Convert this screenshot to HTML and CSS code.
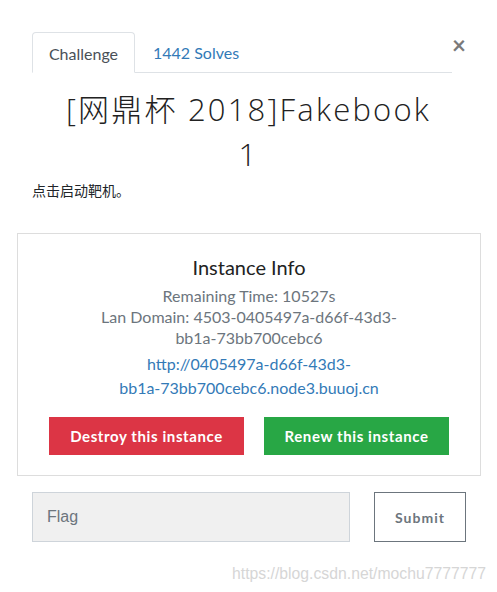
FILE: index.html
```html
<!DOCTYPE html>
<html>
<head>
<meta charset="utf-8">
<link rel="stylesheet" href="styles.css">
</head>
<body>
<div class="modal">
  <div class="tabs-row">
    <ul class="tabs">
      <li class="tab active">Challenge</li>
      <li class="tab link">1442 Solves</li>
    </ul>
    <span class="close">&times;</span>
  </div>
  <h2 class="title">[网鼎杯 2018]Fakebook<br>1</h2>
  <p class="desc">点击启动靶机。</p>
  <div class="instance">
    <h4 class="inst-title">Instance Info</h4>
    <p class="muted">Remaining Time: 10527s</p>
    <p class="muted">Lan Domain: 4503-0405497a-d66f-43d3-<br>bb1a-73bb700cebc6</p>
    <p class="url"><a href="#">http://0405497a-d66f-43d3-<br>bb1a-73bb700cebc6.node3.buuoj.cn</a></p>
    <div class="actions">
      <button class="btn danger">Destroy this instance</button>
      <button class="btn success">Renew this instance</button>
    </div>
  </div>
  <div class="submit-row">
    <div class="flag-input">Flag</div>
    <button class="submit">Submit</button>
  </div>
  <div class="watermark">https://blog.csdn.net/mochu7777777</div>
</div>
</body>
</html>
```
FILE: styles.css
```css
html, body {
  margin: 0;
  padding: 0;
  background: #fff;
}
body {
  font-family: Lato, "Noto Sans CJK SC", sans-serif;
  color: #212529;
  width: 497px;
  height: 592px;
  overflow: hidden;
}
.modal {
  padding-top: 32px;
}
.tabs-row {
  display: flex;
  align-items: flex-start;
  margin-left: 32px;
}
.tabs {
  list-style: none;
  margin: 0;
  padding: 0;
  display: flex;
  width: 420px;
  border-bottom: 1px solid #dee2e6;
  height: 41px;
  box-sizing: border-box;
}
.tab {
  font-size: 16px;
  line-height: 42px;
  box-sizing: border-box;
  height: 41px;
}
.tab.active {
  color: #495057;
  width: 103px;
  text-align: center;
  border: 1px solid #dee2e6;
  border-bottom-color: #fff;
  border-radius: 4px 4px 0 0;
  background: #fff;
}
.tab.link {
  color: #337ab7;
  padding-left: 18px;
}
.close {
  font-size: 24px;
  font-weight: 700;
  color: #7a7a7a;
  line-height: 26px;
  width: 14px;
  text-align: center;
}
.title {
  margin: 14px 0 0;
  text-align: center;
  font-family: "Open Sans", "Noto Sans CJK SC", sans-serif;
  font-weight: 300;
  font-size: 31px;
  line-height: 45px;
  letter-spacing: 2.2px;
  color: #222;
}
.desc {
  margin: 4px 0 0 32px;
  font-size: 14px;
  line-height: 20px;
  color: #212529;
}
.instance {
  margin: 32px 16px 0 17px;
  border: 1px solid #dddddd;
  text-align: center;
  padding: 22px 0 20px;
}
.inst-title {
  margin: 0 0 7px;
  font-weight: 400;
  font-size: 20px;
  line-height: 22px;
  color: #222;
}
.muted {
  margin: 0;
  font-size: 16px;
  line-height: 21px;
  color: #6c757d;
}
.url {
  margin: 4px 0 0;
  font-size: 16px;
  line-height: 24px;
}
.url a {
  color: #337ab7;
  text-decoration: none;
}
.actions {
  display: flex;
  justify-content: center;
  gap: 20px;
  margin-top: 17px;
}
.btn {
  border: none;
  height: 38px;
  color: #fff;
  font-family: Lato, sans-serif;
  font-weight: 700;
  font-size: 15px;
  letter-spacing: 0.6px;
  padding: 0;
}
.btn.danger {
  background: #dc3545;
  width: 195px;
}
.btn.success {
  background: #28a745;
  width: 185px;
}
.submit-row {
  display: flex;
  margin: 16px 0 0 32px;
  gap: 24px;
}
.flag-input {
  width: 318px;
  height: 50px;
  box-sizing: border-box;
  background: #f0f0f0;
  border: 1px solid #ced4da;
  font-family: "Liberation Sans", Arial, sans-serif;
  font-size: 16px;
  line-height: 48px;
  padding-left: 14px;
  color: #6c757d;
}
.submit {
  width: 92px;
  height: 50px;
  box-sizing: border-box;
  background: #fff;
  border: 1px solid #6c757d;
  color: #6c757d;
  font-family: Lato, sans-serif;
  font-weight: 700;
  font-size: 14px;
  letter-spacing: 1px;
}
.watermark {
  text-align: right;
  margin: 23px 11px 0 0;
  font-family: "Liberation Sans", Arial, sans-serif;
  font-size: 15.75px;
  color: #d6d6d6;
}
```
